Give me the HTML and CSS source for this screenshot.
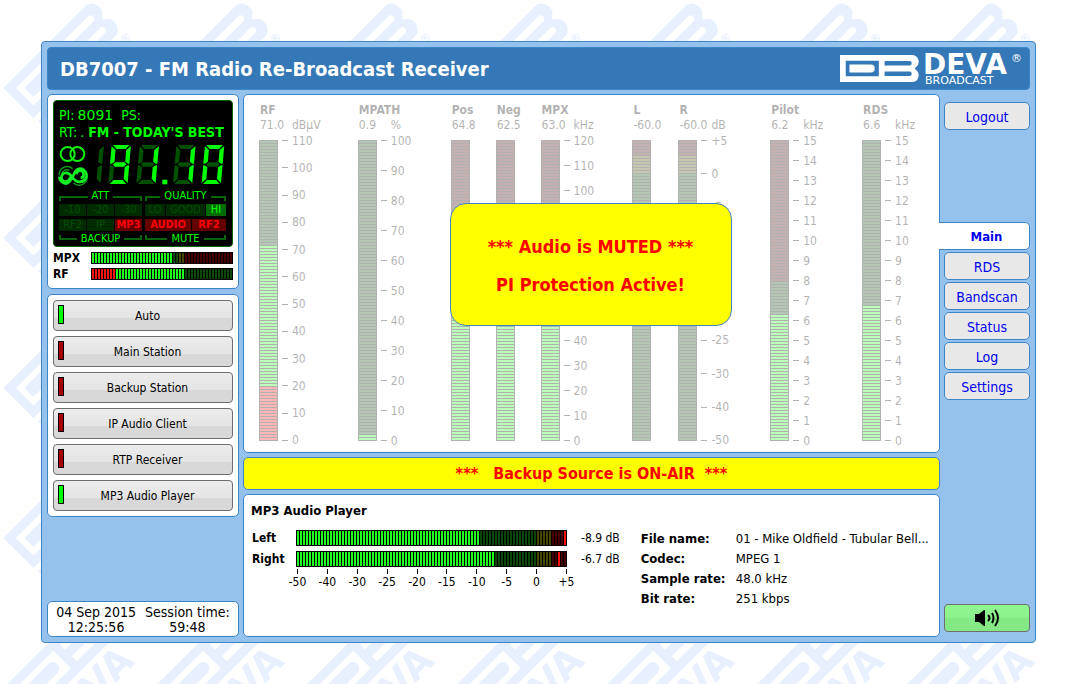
FILE: index.html
```html
<!DOCTYPE html>
<html lang="en">
<head>
<meta charset="utf-8">
<meta name="viewport" content="width=device-width, initial-scale=1">
<title>DB7007 - FM Radio Re-Broadcast Receiver</title>
<link rel="stylesheet" href="styles.css">
</head>
<body>
<svg class="watermark" aria-hidden="true">
  <defs>
    <symbol id="mark" viewBox="0 0 234 80">
      <path fill-rule="evenodd" d="M0 0H213A20 20 0 0 1 225 36L221 40L225 44A20 20 0 0 1 213 80H0ZM17 17V63H115V17ZM132 18V31H206A6 6 0 0 0 206 18ZM132 49V62H206A6 6 0 0 0 206 49Z"/>
      <path d="M28 28H91A12 12 0 0 1 91 52H28Z"/>
    </symbol>
    <pattern id="tile" width="150" height="150" patternUnits="userSpaceOnUse">
      <g transform="translate(3 88) rotate(-45)">
        <use href="#mark" width="126" height="43"/>
        <text class="wm-name" x="-2" y="76">DEVA</text>
        <text class="wm-sub" x="2" y="88">BROADCAST</text>
        <text class="wm-sub" x="116" y="56">®</text>
      </g>
    </pattern>
  </defs>
  <rect width="100%" height="100%" fill="url(#tile)"/>
</svg>

<div class="app">
  <header class="header">
    <h1>DB7007 - FM Radio Re-Broadcast Receiver</h1>
    <svg class="logo" viewBox="0 0 184 32" role="img" aria-label="DEVA Broadcast">
      <use href="#mark" y="2" width="79" height="27"/>
      <text class="logo-name" x="83" y="21">DEVA</text>
      <text class="logo-sub" x="85" y="31">BROADCAST</text>
      <text class="logo-sub" x="171" y="9">®</text>
    </svg>
  </header>

  <aside class="side">
    <section class="card status">
      <div class="lcd">
        <div class="lcd-row"><span>PI:</span><span class="wide">8091</span><span class="ps">PS:</span></div>
        <div class="lcd-row"><span>RT:</span><span class="dot">.</span><b>FM - TODAY'S BEST</b></div>
        <svg class="frequency" viewBox="0 0 176 44" role="img" aria-label="Stereo, RDS, 91.10 MHz">
          <defs>
            <polygon id="sa" points="4,0 54,0 43,12 15,12"/>
            <polygon id="sb" points="58,3 58,56 53,56 45,50 45,15"/>
            <polygon id="sc" points="58,61 58,114 45,102 45,67 53,61"/>
            <polygon id="sd" points="4,117 54,117 43,105 15,105"/>
            <polygon id="se" points="0,61 5,61 13,67 13,102 0,114"/>
            <polygon id="sf" points="0,3 13,15 13,50 5,56 0,56"/>
            <polygon id="sg" points="9,58 15,52 43,52 49,58 43,65 15,65"/>
          </defs>
          <g transform="scale(.3333) translate(-15 -24)">
            <g class="ring"><circle cx="53" cy="60" r="21"/><circle cx="82" cy="60" r="21"/></g>
            <g class="rds">
              <path d="M28 124A24 24 0 0 1 68 104M36 122A15 15 0 0 1 58 109M70 146A24 24 0 0 0 111 126M80 139A15 15 0 0 0 103 128"/>
              <path class="thick" d="M60 128A13 13 0 1 1 46 117C66 112 66 144 88 144A20 20 0 1 0 84 105C70 108 70 146 47 149A22 22 0 0 1 28 128"/>
              <path class="thick" d="M79 121A11 11 0 1 1 92 132"/>
            </g>
            <g transform="translate(104 33) skewX(-5)"><use class="off" href="#sb"/><use class="off" href="#sc"/></g>
            <g transform="translate(185 33) skewX(-5)"><use href="#sa"/><use href="#sb"/><use href="#sc"/><use href="#sd"/><use class="off" href="#se"/><use href="#sf"/><use href="#sg"/></g>
            <g transform="translate(269 33) skewX(-5)"><use class="off" href="#sa"/><use href="#sb"/><use href="#sc"/><use class="off" href="#sd"/><use class="off" href="#se"/><use class="off" href="#sf"/><use class="off" href="#sg"/></g>
            <rect x="337" y="137" width="15" height="14"/>
            <g transform="translate(379 33) skewX(-5)"><use class="off" href="#sa"/><use href="#sb"/><use href="#sc"/><use class="off" href="#sd"/><use class="off" href="#se"/><use class="off" href="#sf"/><use class="off" href="#sg"/></g>
            <g transform="translate(465 33) skewX(-5)"><use href="#sa"/><use href="#sb"/><use href="#sc"/><use href="#sd"/><use href="#se"/><use href="#sf"/><use class="off" href="#sg"/></g>
          </g>
        </svg>
        <div class="flags">
          <span class="bracket">ATT</span><span class="bracket">QUALITY</span>
          <div class="cells"><span class="w27">-10</span><span class="w27">-20</span><span class="w27">-30</span></div>
          <div class="cells"><span class="w20">LO</span><span class="w39">GOOD</span><span class="w20 good">HI</span></div>
          <div class="cells"><span class="w27">RF2</span><span class="w27">IP</span><span class="w27 alarm">MP3</span></div>
          <div class="cells"><span class="w46 alarm">AUDIO</span><span class="w34 alarm">RF2</span></div>
          <span class="bracket under">BACKUP</span><span class="bracket under">MUTE</span>
        </div>
      </div>
      <div class="mini"><span>MPX</span>
        <div class="meter flat" role="meter" aria-label="MPX"><i class="g" style="flex-grow:27"></i><i class="g-off" style="flex-grow:2"></i><i class="y-off" style="flex-grow:2"></i><i class="r-off" style="flex-grow:16"></i></div>
      </div>
      <div class="mini"><span>RF</span>
        <div class="meter flat" role="meter" aria-label="RF"><i class="r" style="flex-grow:8"></i><i class="g" style="flex-grow:23"></i><i class="g-off" style="flex-grow:16"></i></div>
      </div>
    </section>

    <section class="card sources">
      <button type="button" class="source on">Auto</button>
      <button type="button" class="source">Main Station</button>
      <button type="button" class="source">Backup Station</button>
      <button type="button" class="source">IP Audio Client</button>
      <button type="button" class="source">RTP Receiver</button>
      <button type="button" class="source on">MP3 Audio Player</button>
    </section>

    <section class="card clock">
      <div>04 Sep 2015<br>12:25:56</div>
      <div>Session time:<br>59:48</div>
    </section>
  </aside>

  <main class="content">
    <section class="card levels">
      <div class="gauges">
        <div class="gauge"><h2>RF</h2><p><span>71.0</span><span>dBµV</span></p>
          <div class="dial"><div class="meter" role="meter" aria-label="RF"><i class="g-off" style="flex-grow:35"></i><i class="g" style="flex-grow:47"></i><i class="r" style="flex-grow:18"></i></div>
          <ol><li>110</li><li>100</li><li>90</li><li>80</li><li>70</li><li>60</li><li>50</li><li>40</li><li>30</li><li>20</li><li>10</li><li>0</li></ol></div></div>
        <div class="gauge"><h2>MPATH</h2><p><span>0.9</span><span>%</span></p>
          <div class="dial"><div class="meter" role="meter" aria-label="MPATH"><i class="g-off" style="flex-grow:98"></i><i class="g" style="flex-grow:2"></i></div>
          <ol><li>100</li><li>90</li><li>80</li><li>70</li><li>60</li><li>50</li><li>40</li><li>30</li><li>20</li><li>10</li><li>0</li></ol></div></div>
        <div class="gauge"><h2>Pos</h2><p><span>64.8</span></p>
          <div class="dial"><div class="meter" role="meter" aria-label="Pos"><i class="r-off" style="flex-grow:37"></i><i class="g-off" style="flex-grow:9"></i><i class="g" style="flex-grow:54"></i></div></div></div>
        <div class="gauge"><h2>Neg</h2><p><span>62.5</span></p>
          <div class="dial"><div class="meter" role="meter" aria-label="Neg"><i class="r-off" style="flex-grow:37"></i><i class="g-off" style="flex-grow:11"></i><i class="g" style="flex-grow:52"></i></div></div></div>
        <div class="gauge"><h2>MPX</h2><p><span>63.0</span><span>kHz</span></p>
          <div class="dial"><div class="meter" role="meter" aria-label="MPX"><i class="r-off" style="flex-grow:37"></i><i class="g-off" style="flex-grow:10"></i><i class="g" style="flex-grow:53"></i></div>
          <ol><li>120</li><li>110</li><li>100</li><li>90</li><li>80</li><li>70</li><li>60</li><li>50</li><li>40</li><li>30</li><li>20</li><li>10</li><li>0</li></ol></div></div>
        <div class="gauge"><h2>L</h2><p><span>-60.0</span></p>
          <div class="dial"><div class="meter" role="meter" aria-label="Left"><i class="r-off" style="flex-grow:5"></i><i class="y-off" style="flex-grow:6"></i><i class="g-off" style="flex-grow:89"></i></div></div></div>
        <div class="gauge"><h2>R</h2><p><span>-60.0</span><span>dB</span></p>
          <div class="dial"><div class="meter" role="meter" aria-label="Right"><i class="r-off" style="flex-grow:5"></i><i class="y-off" style="flex-grow:6"></i><i class="g-off" style="flex-grow:89"></i></div>
          <ol><li>+5</li><li>0</li><li>-5</li><li>-10</li><li>-15</li><li>-20</li><li>-25</li><li>-30</li><li>-40</li><li>-50</li></ol></div></div>
        <div class="gauge"><h2>Pilot</h2><p><span>6.2</span><span>kHz</span></p>
          <div class="dial"><div class="meter" role="meter" aria-label="Pilot"><i class="r-off" style="flex-grow:47"></i><i class="g-off" style="flex-grow:11"></i><i class="g" style="flex-grow:42"></i></div>
          <ol><li>15</li><li>14</li><li>13</li><li>12</li><li>11</li><li>10</li><li>9</li><li>8</li><li>7</li><li>6</li><li>5</li><li>4</li><li>3</li><li>2</li><li>1</li><li>0</li></ol></div></div>
        <div class="gauge"><h2>RDS</h2><p><span>6.6</span><span>kHz</span></p>
          <div class="dial"><div class="meter" role="meter" aria-label="RDS"><i class="g-off" style="flex-grow:55"></i><i class="g" style="flex-grow:45"></i></div>
          <ol><li>15</li><li>14</li><li>13</li><li>12</li><li>11</li><li>10</li><li>9</li><li>8</li><li>7</li><li>6</li><li>5</li><li>4</li><li>3</li><li>2</li><li>1</li><li>0</li></ol></div></div>
      </div>
      <div class="alert" role="alert"><p>*** Audio is MUTED ***</p><p>PI Protection Active!</p></div>
    </section>

    <div class="card banner" role="status">***&nbsp;&nbsp; Backup Source is ON-AIR &nbsp;***</div>

    <section class="card player">
      <h2>MP3 Audio Player</h2>
      <div class="player-body">
        <div class="channels">
          <b>Left</b>
          <div class="meter flat" role="meter" aria-label="Left"><i class="g" style="flex-grow:61"></i><i class="g-off" style="flex-grow:19"></i><i class="y-off" style="flex-grow:5"></i><i class="r-off" style="flex-grow:4"></i><i class="r" style="flex-grow:1"></i></div>
          <span>-8.9 dB</span>
          <b>Right</b>
          <div class="meter flat" role="meter" aria-label="Right"><i class="g" style="flex-grow:66"></i><i class="g-off" style="flex-grow:14"></i><i class="y-off" style="flex-grow:5"></i><i class="r-off" style="flex-grow:2"></i><i class="r" style="flex-grow:1"></i><i class="r-off" style="flex-grow:2"></i></div>
          <span>-6.7 dB</span>
          <ol class="db-scale"><li>-50</li><li>-40</li><li>-30</li><li>-25</li><li>-20</li><li>-15</li><li>-10</li><li>-5</li><li>0</li><li>+5</li></ol>
        </div>
        <dl class="info">
          <dt>File name:</dt><dd>01 - Mike Oldfield - Tubular Bell...</dd>
          <dt>Codec:</dt><dd>MPEG 1</dd>
          <dt>Sample rate:</dt><dd>48.0 kHz</dd>
          <dt>Bit rate:</dt><dd>251 kbps</dd>
        </dl>
      </div>
    </section>
  </main>

  <nav class="nav">
    <a class="logout" href="#logout">Logout</a>
    <a class="current" href="#main" aria-current="page">Main</a>
    <a href="#rds">RDS</a>
    <a href="#bandscan">Bandscan</a>
    <a href="#status">Status</a>
    <a href="#log">Log</a>
    <a href="#settings">Settings</a>
    <button type="button" class="sound" aria-label="Sound">
      <svg viewBox="0 0 26 18" width="26" height="18" aria-hidden="true">
        <path d="M1 5H5L10 1H11V17H10L5 13H1Z"/>
        <path class="wave" d="M14 6Q17 9 14 12M18 4Q21 9 18 14M21 1Q27 9 21 17"/>
      </svg>
    </button>
  </nav>
</div>
</body>
</html>
```
FILE: styles.css
```css
*, *::before, *::after { box-sizing: border-box; }

body {
  margin: 0;
  padding: 41px 41px 41px;
  background: #fff;
  color: #000;
  font: 12px/16px "DejaVu Sans Condensed", "DejaVu Sans", Tahoma, sans-serif;
}

h1, h2, p, ol, dl, dd { margin: 0; padding: 0; }
ol { list-style: none; }

.watermark {
  position: absolute;
  z-index: -1;
  top: 0;
  left: 0;
  width: calc(100% - 27px);
  height: 100%;
  fill: #e8f0ff;
}
.wm-name { font: bold 38px "DejaVu Sans", sans-serif; }
.wm-sub { font: bold 12px "DejaVu Sans", sans-serif; }

.app {
  display: grid;
  grid-template-columns: 192px minmax(0, 1fr) 90px;
  grid-template-rows: 43px auto;
  gap: 4px 0;
  padding: 5px;
  border: 1px solid #3c86c8;
  border-radius: 4px;
  background: #95c2ec;
}

.header {
  grid-column: 1 / -1;
  display: flex;
  align-items: center;
  justify-content: space-between;
  padding: 0 5px 0 12px;
  border: 1px solid #3c86c8;
  border-radius: 4px;
  background: #3478b7;
  color: #fff;
}
.header h1 { font-size: 20px; line-height: 26px; }
.logo { width: 184px; height: 32px; fill: #fff; overflow: visible; }
.logo-name { font: bold 28px "DejaVu Sans", sans-serif; }
.logo-sub { font: 11px "DejaVu Sans", sans-serif; }

.card {
  border: 1px solid #3c86c8;
  border-radius: 5px;
  background: #fff;
}

/* Left column */
.side { display: flex; flex-direction: column; gap: 5px; }
.status { padding: 5px 5px 6px; }

.lcd {
  padding: 6px 5px 2px;
  border: 1px solid #076407;
  border-radius: 4px;
  background: #000;
  color: #0f0;
}
.lcd-row {
  display: flex;
  font-size: 14px;
  line-height: 17px;
  white-space: nowrap;
}
.lcd-row .wide { margin-left: 3px; font-family: "DejaVu Sans", sans-serif; }
.lcd-row .ps { margin-left: 8px; }
.lcd-row .dot { margin: 0 4px 0 3px; }
.frequency { display: block; width: 176px; height: 44px; margin-left: -4px; margin-top: 1px; fill: #0f0; }
.frequency .off { fill: #005000; }
.ring { fill: none; stroke: #12f012; stroke-width: 6; }
.rds { fill: none; stroke: #0a9a1a; stroke-width: 4; }
.rds .thick { stroke: #14f024; stroke-width: 8; }

.flags {
  display: grid;
  grid-template-columns: 83px 81px;
  column-gap: 3px;
  row-gap: 3px;
  margin-top: 5px;
  font-size: 11px;
  line-height: 12px;
}
.bracket {
  display: flex;
  align-items: center;
  gap: 4px;
  height: 10px;
}
.bracket::before, .bracket::after {
  content: "";
  flex: 1;
  height: 5px;
  margin-top: 4px;
  border-top: 2px solid #076407;
}
.bracket::before { border-left: 2px solid #076407; }
.bracket::after { border-right: 2px solid #076407; }
.bracket.under::before, .bracket.under::after {
  margin: 0 0 4px;
  border-top: 0;
  border-bottom: 2px solid #076407;
}
.cells { display: flex; gap: 1px; text-align: center; }
.cells span { height: 12px; background: #002a00; color: #005000; }
.cells .w20 { flex: 20; }
.cells .w27 { flex: 27; }
.cells .w34 { flex: 34; }
.cells .w39 { flex: 39; }
.cells .w46 { flex: 46; }
.cells .good { background: #006c00; color: #0f0; }
.cells .alarm { background: #640000; color: #f00; font-weight: bold; }

.mini {
  display: grid;
  grid-template-columns: 38px 142px;
  align-items: center;
  height: 16px;
  font-weight: bold;
}
.mini .meter { height: 12px; }
.lcd + .mini { margin-top: 3px; }

/* Segmented level meters */
.meter {
  position: relative;
  display: flex;
  flex-direction: column;
  background: #000;
}
.meter i { flex: 0 1 0; }
.meter::after {
  content: "";
  position: absolute;
  inset: 0;
  border: 1px solid #000;
  border-width: 0 1px;
  background: repeating-linear-gradient(to bottom, #000 0 1px, transparent 1px 3px);
}
.meter.flat { flex-direction: row; padding-right: 1px; }
.meter.flat::after {
  border-width: 1px 0;
  background: repeating-linear-gradient(to right, #000 0 1px, transparent 1px 3px);
}
.g { background: #21ff21; }
.g-off { background: #0b460b; }
.y-off { background: #464600; }
.r { background: #f11; }
.r-off { background: #460000; }

.sources { display: grid; gap: 5px; padding: 5px; }
.source {
  position: relative;
  height: 31px;
  padding: 0 0 0 9px;
  border: 1px solid #6e6e6e;
  border-radius: 4px;
  background: linear-gradient(#ececec, #e4e4e4 60%, #d8d8d8 60%, #d8d8d8);
  color: #000;
  font: inherit;
}
.source::before {
  content: "";
  position: absolute;
  top: 4px;
  left: 4px;
  width: 6px;
  height: 19px;
  border: 1px solid #000;
  background: #a80000;
}
.source.on::before { background: #0f0; }

.clock {
  display: flex;
  justify-content: center;
  gap: 9px;
  margin-top: auto;
  padding: 3px 0 1px;
  font-size: 14px;
  line-height: 15px;
  text-align: center;
}

/* Middle column */
.content { display: flex; flex-direction: column; gap: 4px; margin-left: 4px; }
.levels { position: relative; padding: 7px 0 11px 15px; }
.gauges {
  display: grid;
  grid-template-columns: 99fr 93fr 45fr 45fr 92fr 46fr 92fr 92fr 77fr;
  opacity: .3;
}
.gauge h2 { padding-left: 1px; font-size: 12px; line-height: 16px; }
.gauge p { display: grid; grid-template-columns: 32px auto; padding-left: 1px; line-height: 14px; justify-content: start; }
.dial { display: flex; margin-top: 8px; }
.dial .meter { width: 19px; height: 301px; padding-bottom: 1px; }
.dial ol { display: flex; flex-direction: column; justify-content: space-between; margin-left: 4px; }
.dial li { display: flex; align-items: center; gap: 4px; height: 1px; }
.dial li::before { content: ""; width: 6px; height: 1px; background: #000; }

.alert {
  position: absolute;
  top: 108px;
  left: 50%;
  width: 282px;
  margin-left: -142px;
  padding: 24px 0 21px;
  border: 1px solid #3c86c8;
  border-radius: 16px;
  background: #ff0;
  color: #f00;
  font-size: 18px;
  font-weight: bold;
  line-height: 38px;
  text-align: center;
}

.banner {
  height: 33px;
  background: #ff0;
  color: #f00;
  font-size: 16px;
  font-weight: bold;
  line-height: 31px;
  text-align: center;
}

.player { padding: 7px 7px 27px; flex: 1; }
.player h2 { font-size: 13px; line-height: 17px; }
.player-body { display: flex; gap: 21px; margin-top: 8px; padding-left: 1px; }
.channels {
  display: grid;
  grid-template-columns: 44px 271px auto;
  grid-auto-rows: 16px;
  row-gap: 5px;
  margin-top: 3px;
}
.channels b { font-size: 12px; }
.channels span { margin-left: 14px; }
.db-scale {
  grid-column: 2;
  display: flex;
  justify-content: space-between;
  margin: -3px 0 0 1px;
}
.db-scale li {
  display: flex;
  flex-direction: column;
  align-items: center;
  width: 1px;
  line-height: 16px;
}
.db-scale li::before { content: ""; flex: none; width: 1px; height: 5px; background: #000; }

.info {
  flex: 1;
  display: grid;
  grid-template-columns: 95px auto;
  grid-auto-rows: 20px;
  align-content: start;
  margin-top: 2px;
  font-size: 13px;
  line-height: 20px;
  white-space: nowrap;
}
.info dt { font-weight: bold; }

/* Right column */
.nav { display: flex; flex-direction: column; gap: 2px; padding: 8px 0 5px; }
.nav a {
  height: 28px;
  margin-left: 4px;
  border: 1px solid #3c86c8;
  border-radius: 5px;
  background: #e8e8e8;
  color: #00e;
  font-size: 14px;
  line-height: 28px;
  text-align: center;
  text-decoration: none;
}
.nav .logout { margin-bottom: 90px; }
.nav .current {
  z-index: 1;
  margin-left: -1px;
  padding-left: 5px;
  border-left: 0;
  border-radius: 0 5px 5px 0;
  background: #fff;
  font-size: 13px;
  font-weight: bold;
}
.sound {
  display: flex;
  align-items: center;
  justify-content: center;
  height: 28px;
  margin: auto 0 0 4px;
  padding: 0;
  border: 1px solid #6e6e6e;
  border-radius: 4px;
  background: linear-gradient(#90f690, #8cf28c 50%, #84e884 50%);
}
.wave { fill: none; stroke: #000; stroke-width: 2; }
```
